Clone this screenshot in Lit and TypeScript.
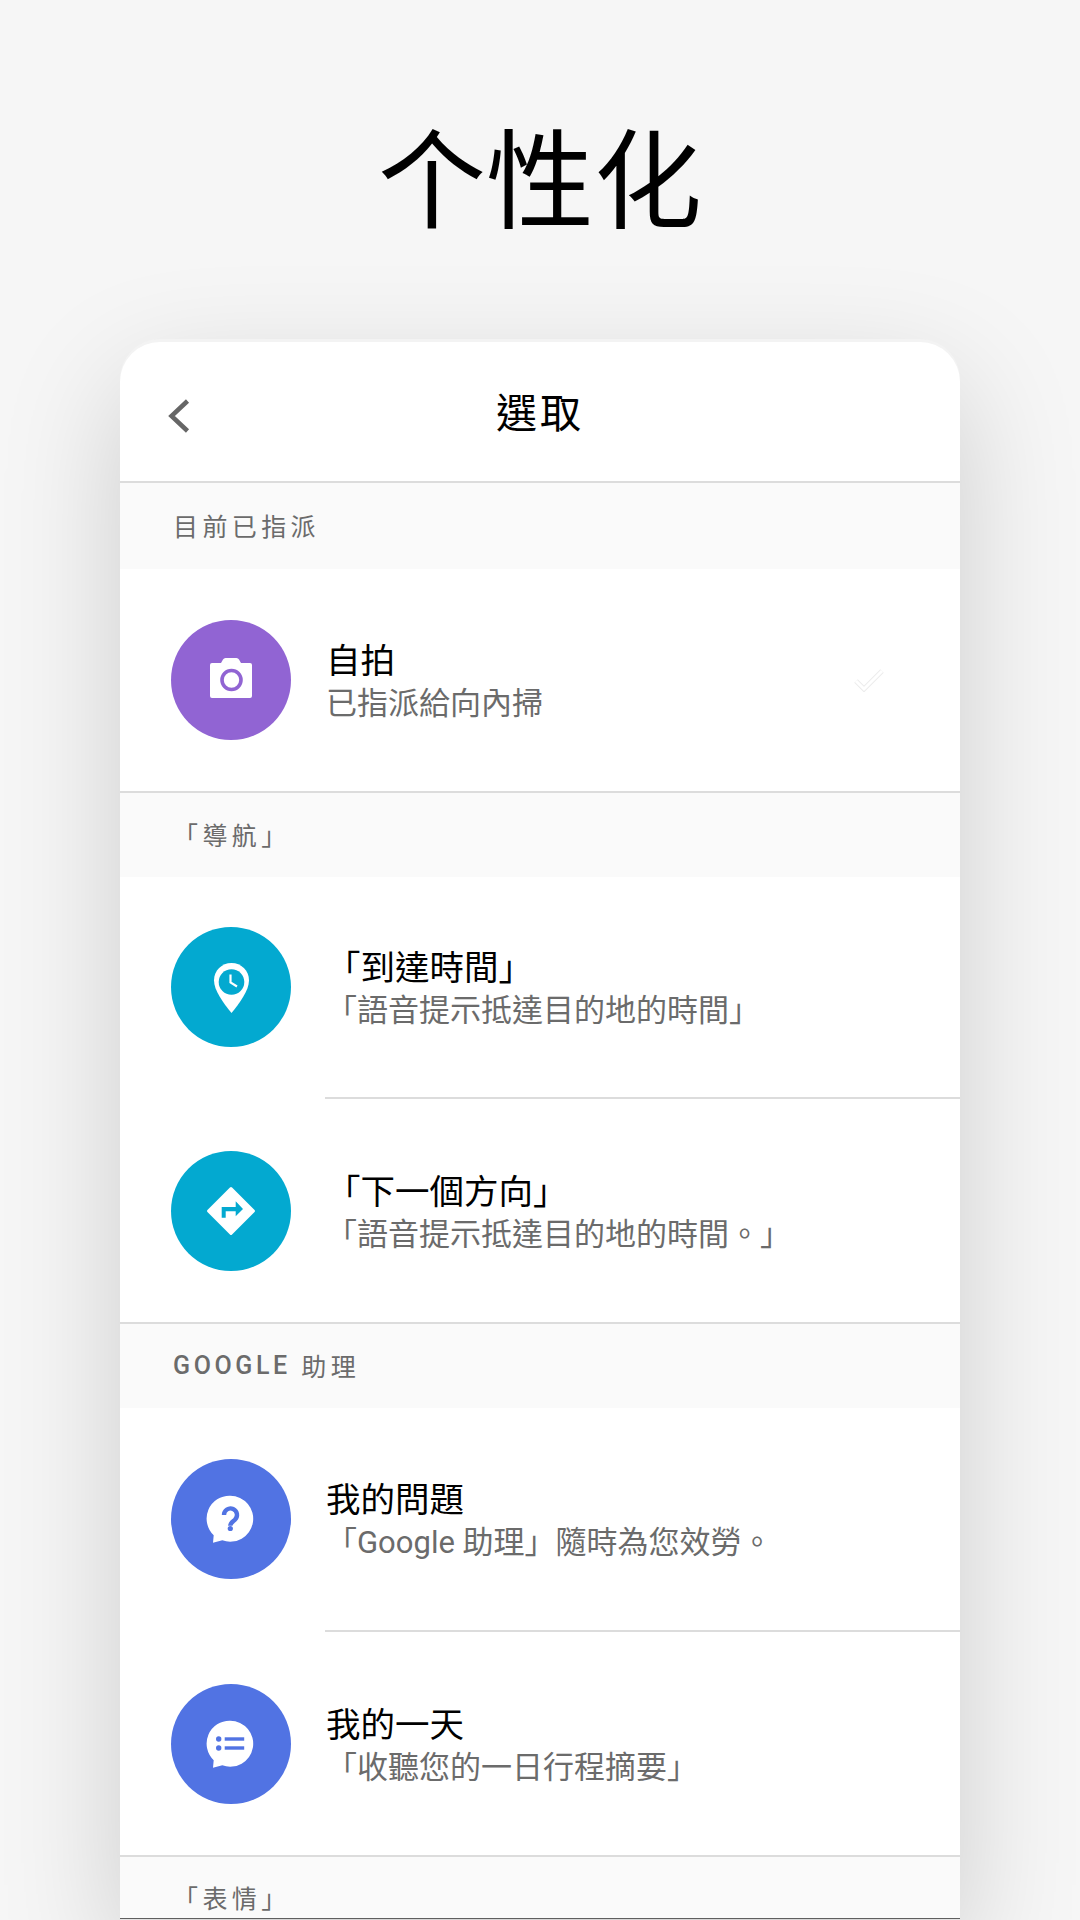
import { LitElement, html, css, svg } from "lit";
import { customElement } from "lit/decorators.js";

const PURPLE = "#9164d3";
const TEAL = "#03a9d0";
const BLUE = "#5173e3";

const bubble = svg`<path fill="#fff" d="M59.3 36.7a23 23 0 1 1-8 44.6L42 83.7l.7-7.4a23 23 0 0 1 16.6-39.6z"/>`;

const icons = {
  camera: svg`<path fill="#fff" d="M41 43h9l2-3.5q.8-1.500 2.500-1.500h11q1.700 0 2.500 1.500l2 3.500h9q2 0 2 2v31q0 2-2 2H41q-2 0-2-2V45q0-2 2-2z"/>
    <circle cx="60.500" cy="60" r="9.500" fill="none" stroke="${PURPLE}" stroke-width="3.600"/>`,
  pin: svg`<path fill="#fff" d="M60.500 36c9.700 0 17.500 7.600 17.500 17.200 0 10.500-9.500 22.800-17.500 32.800-8-10-17.500-22.300-17.500-32.800C43 43.600 50.800 36 60.500 36z"/>
    <circle cx="60.500" cy="55" r="12.800" fill="${TEAL}"/>
    <path fill="none" stroke="#fff" stroke-width="2.200" d="M59.500 47.500v8l6.500 4"/>`,
  sign: svg`<path fill="#fff" stroke="#fff" stroke-width="3" stroke-linejoin="round" d="M60 37.500 82.500 60 60 82.500 37.500 60z"/>
    <path fill="${TEAL}" d="M50.700 66.700V56h14v-5.700L72 58l-7.300 7.300v-5h-10v6.400z"/>`,
  question: svg`${bubble}
    <path fill="none" stroke="${BLUE}" stroke-width="4.400" d="M53 56a6.500 6.500 0 1 1 10.800 4.800c-2.600 2.200-4.500 3-4.500 6"/>
    <circle cx="59.300" cy="69.500" r="2.600" fill="${BLUE}"/>`,
  list: svg`${bubble}
    <circle cx="47.700" cy="55" r="2.700" fill="${BLUE}"/>
    <circle cx="47.700" cy="64" r="2.700" fill="${BLUE}"/>
    <rect x="53.700" y="53.300" width="19.500" height="3.400" fill="${BLUE}"/>
    <rect x="53.700" y="62.300" width="19.500" height="3.400" fill="${BLUE}"/>`,
};

type IconName = keyof typeof icons;

interface Item {
  icon: IconName;
  color: string;
  title: string;
  sub: string;
  height: number;
  checked?: boolean;
}

const sections: { label: unknown; height: number; items: Item[] }[] = [
  {
    label: "目前已指派",
    height: 86,
    items: [{ icon: "camera", color: PURPLE, title: "自拍", sub: "已指派給向內掃", height: 222, checked: true }],
  },
  {
    label: "「導航」",
    height: 84,
    items: [
      { icon: "pin", color: TEAL, title: "「到達時間」", sub: "「語音提示抵達目的地的時間」", height: 220 },
      { icon: "sign", color: TEAL, title: "「下一個方向」", sub: "「語音提示抵達目的地的時間。」", height: 223 },
    ],
  },
  {
    label: html`<b>GOOGLE</b> 助理`,
    height: 84,
    items: [
      { icon: "question", color: BLUE, title: "我的問題", sub: "「Google 助理」隨時為您效勞。", height: 222 },
      { icon: "list", color: BLUE, title: "我的一天", sub: "「收聽您的一日行程摘要」", height: 223 },
    ],
  },
];

@customElement("app-root")
export class AppRoot extends LitElement {
  static styles = css`
    :host {
      display: block;
      width: 1080px;
      height: 1920px;
      overflow: hidden;
      background: #f6f6f6;
      font-family: "Roboto", "Noto Sans CJK TC", sans-serif;
    }
    h1 {
      margin: 0;
      height: 342px;
      padding-top: 103px;
      box-sizing: border-box;
      font: 400 108px/140px "Noto Sans CJK SC", sans-serif;
      text-align: center;
      color: #000;
    }
    .card {
      margin: 0 120px;
      background: #fff;
      border-radius: 40px 40px 0 0;
      box-shadow: 0 -3px 0 #f3f3f3, 0 40px 120px rgba(0, 0, 0, 0.17);
    }
    .head {
      height: 139px;
      display: grid;
      grid-template-columns: 1fr auto 1fr;
      align-items: center;
      padding: 0 0 0 48px;
      font-size: 41px;
      letter-spacing: 3px;
      color: #000;
      border-bottom: 2px solid #dcdcdc;
    }
    .head svg {
      display: block;
      margin-top: 8px;
    }
    .head span {
      padding-right: 48px;
      margin-top: -4px;
    }
    .label {
      display: flex;
      align-items: center;
      white-space: pre;
      box-sizing: border-box;
      padding: 0 0 2px 53px;
      background: #fafafa;
      color: #6b6b6b;
      font-size: 25px;
      letter-spacing: 4.4px;
    }
    .label b {
      font-weight: 500;
      letter-spacing: 3.6px;
    }
    .label.cut {
      height: 62px;
      align-items: flex-start;
      padding-top: 22px;
      border-bottom: 1px solid #5f5f5f;
    }
    .row {
      display: flex;
      align-items: center;
      padding-left: 51px;
      box-sizing: border-box;
    }
    .dot {
      width: 120px;
      height: 120px;
      border-radius: 50%;
      flex: none;
    }
    .dot svg {
      display: block;
    }
    .text {
      margin-left: 35px;
      flex: 1;
      margin-top: 3px;
    }
    .title {
      font-size: 34.500px;
      line-height: 44px;
      color: #000;
    }
    .sub {
      font-size: 31px;
      line-height: 41px;
      color: #6b6b6b;
    }
    .check {
      margin-right: 76px;
    }
    .divider {
      height: 2px;
      background: #dcdcdc;
    }
    .divider.inset {
      margin-left: 205px;
    }
  `;

  private renderItem(item: Item) {
    return html`<div class="row" style="height:${item.height}px">
      <div class="dot" style="background:${item.color}">
        <svg width="120" height="120" viewBox="0 0 120 120">${icons[item.icon]}</svg>
      </div>
      <div class="text">
        <div class="title">${item.title}</div>
        <div class="sub">${item.sub}</div>
      </div>
      ${item.checked
        ? html`<svg class="check" width="30" height="24" viewBox="0 0 30 24" fill="none">
            <path d="M2 13l8 8L28 3" stroke="#ececec" stroke-width="5"/>
            <path d="M2 13l8 8L28 3" stroke="#fff" stroke-width="3"/>
          </svg>`
        : null}
    </div>`;
  }

  render() {
    return html`<h1>个性化</h1>
      <div class="card">
        <div class="head">
          <svg width="22" height="34" viewBox="0 0 22 34" fill="none">
            <path d="M19.500 2 3.500 17l16 15" stroke="#666" stroke-width="4.500"/>
          </svg>
          <span>選取</span>
          <i></i>
        </div>
        ${sections.map(
          (s) => html`<div class="label" style="height:${s.height}px">${s.label}</div>
            ${s.items.map(
              (item, i) => html`${this.renderItem(item)}
                <div class="divider ${i < s.items.length - 1 ? "inset" : ""}"></div>`
            )}`
        )}
        <div class="label cut">「表情」</div>
      </div>`;
  }
}
